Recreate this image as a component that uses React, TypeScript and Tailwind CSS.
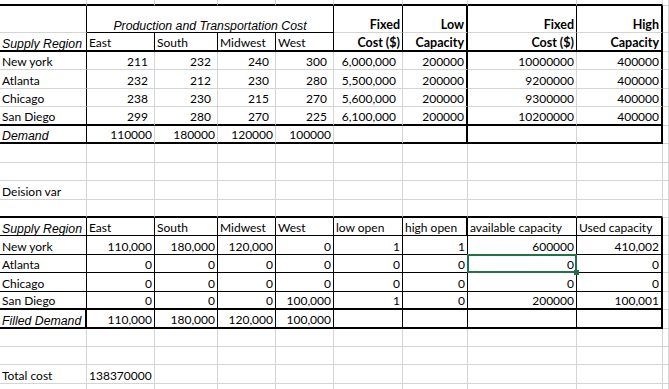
import clsx from "clsx";

type Bd = "g" | "b" | "B" | "n";
type Txt = [string, string] | null;

const RB: Record<Bd, string> = {
  g: "border-r border-r-[#d4d4d4]",
  b: "border-r border-r-black",
  B: "border-r-2 border-r-black",
  n: "",
};
const BB: Record<Bd, string> = {
  g: "border-b border-b-[#d4d4d4]",
  b: "border-b border-b-black",
  B: "border-b-2 border-b-black",
  n: "",
};

// text styles
const L = "justify-start pl-[2px]";
const R = "justify-end pr-[2px]";
const RC = "justify-end pr-[6px]";
const IT = "font-['Liberation_Sans',Arial,sans-serif] italic text-[12.3px] leading-[12px]";
const BO = "font-bold text-[12.5px]";

// border presets (A..I, J)
const G10: Bd[] = ["g", "g", "g", "g", "g", "g", "g", "g", "g", "g"];
const THICK: Bd[] = ["B", "B", "B", "B", "B", "B", "B", "B", "B", "g"];
const THIN: Bd[] = ["b", "b", "b", "b", "b", "b", "b", "b", "b", "g"];
const TOP_HEAD: Bd[] = ["b", "b", "b", "b", "b", "b", "B", "b", "B", "g"];
const TOP_DATA: Bd[] = ["b", "g", "g", "g", "g", "g", "B", "g", "B", "g"];
const BOT: Bd[] = ["b", "b", "b", "b", "b", "b", "b", "b", "B", "g"];
const BOT_HEAD: Bd[] = ["b", "b", "b", "b", "b", "b", "B", "b", "B", "g"];
const BOT_FILL: Bd[] = ["B", "b", "b", "b", "b", "b", "b", "b", "B", "g"];

interface CellProps {
  h: string;
  r: Bd;
  b: Bd;
  t?: Txt;
  span?: boolean;
  selected?: boolean;
}

function Cell({ h, r, b, t, span, selected }: CellProps) {
  return (
    <div
      className={clsx(
        "relative flex items-end whitespace-nowrap",
        h,
        RB[r],
        BB[b],
        span && "col-span-4",
        t ? t[1] : ""
      )}
    >
      {t && <span>{t[0]}</span>}
      {selected && (
        <div className="pointer-events-none absolute -left-px -top-px -right-px -bottom-px z-10 border-2 border-[#217346]">
          <div className="absolute -right-[4px] -bottom-[4px] h-[5px] w-[5px] bg-[#217346]" />
        </div>
      )}
    </div>
  );
}

function Row({
  h,
  rights,
  bottoms,
  texts = [],
  sel,
}: {
  h: string;
  rights: Bd[];
  bottoms: Bd[];
  texts?: Txt[];
  sel?: number;
}) {
  return (
    <>
      {rights.map((r, i) => (
        <Cell key={i} h={h} r={r} b={bottoms[i]} t={texts[i] ?? null} selected={sel === i} />
      ))}
    </>
  );
}

const n = (v: string): Txt => [v, R];
const c = (v: string): Txt => [v, RC];
const l = (v: string): Txt => [v, L];

export default function App() {
  return (
    <div className="h-[389px] w-[669px] overflow-hidden bg-white font-[Lato,sans-serif] text-[12px] leading-[14px] text-black">
      <div className="grid grid-cols-[87px_68px_63px_58px_58px_69px_65px_109px_86px_1fr]">
        {/* top strip */}
        <Row h="h-[6px]" rights={G10} bottoms={THICK} />

        {/* cost table header */}
        <Cell h="h-[27px]" r="b" b="g" />
        <Cell
          h="h-[27px]"
          r="b"
          b="b"
          span
          t={["Production and Transportation Cost", IT + " justify-center"]}
        />
        <Cell h="h-[27px]" r="b" b="g" t={["Fixed", BO + " " + R]} />
        <Cell h="h-[27px]" r="B" b="g" t={["Low", BO + " " + R]} />
        <Cell h="h-[27px]" r="b" b="g" t={["Fixed", BO + " " + R]} />
        <Cell h="h-[27px]" r="B" b="g" t={["High", BO + " " + R]} />
        <Cell h="h-[27px]" r="g" b="g" />

        <Row
          h="h-[19px]"
          rights={TOP_HEAD}
          bottoms={THICK}
          texts={[
            ["Supply Region", IT + " " + L],
            l("East"),
            l("South"),
            l("Midwest"),
            l("West"),
            ["Cost ($)", BO + " " + R],
            ["Capacity", BO + " " + R],
            ["Cost ($)", BO + " " + R],
            ["Capacity", BO + " " + R],
          ]}
        />
        <Row
          h="h-[18px]"
          rights={TOP_DATA}
          bottoms={G10}
          texts={[l("New york"), c("211"), c("232"), c("240"), c("300"), c("6,000,000"), n("200000"), n("10000000"), n("400000")]}
        />
        <Row
          h="h-[19px]"
          rights={TOP_DATA}
          bottoms={G10}
          texts={[l("Atlanta"), c("232"), c("212"), c("230"), c("280"), c("5,500,000"), n("200000"), n("9200000"), n("400000")]}
        />
        <Row
          h="h-[18px]"
          rights={TOP_DATA}
          bottoms={G10}
          texts={[l("Chicago"), c("238"), c("230"), c("215"), c("270"), c("5,600,000"), n("200000"), n("9300000"), n("400000")]}
        />
        <Row
          h="h-[19px]"
          rights={TOP_DATA}
          bottoms={THICK}
          texts={[l("San Diego"), c("299"), c("280"), c("270"), c("225"), c("6,100,000"), n("200000"), n("10200000"), n("400000")]}
        />
        <Row
          h="h-[18px]"
          rights={TOP_DATA}
          bottoms={THICK}
          texts={[["Demand", IT + " " + L], n("110000"), n("180000"), n("120000"), n("100000")]}
        />

        {/* gap rows */}
        <Row h="h-[19px]" rights={G10} bottoms={G10} />
        <Row h="h-[18px]" rights={G10} bottoms={G10} />
        <Row h="h-[19px]" rights={G10} bottoms={G10} texts={[l("Deision var")]} />
        <Row h="h-[18px]" rights={G10} bottoms={THICK} />

        {/* decision variables */}
        <Row
          h="h-[18px]"
          rights={BOT_HEAD}
          bottoms={THIN}
          texts={[
            ["Supply Region", IT + " " + L],
            l("East"),
            l("South"),
            l("Midwest"),
            l("West"),
            l("low open"),
            l("high open"),
            l("available capacity"),
            l("Used capacity"),
          ]}
        />
        <Row
          h="h-[19px]"
          rights={BOT}
          bottoms={THIN}
          texts={[l("New york"), n("110,000"), n("180,000"), n("120,000"), n("0"), n("1"), n("1"), n("600000"), n("410,002")]}
        />
        <Row
          h="h-[18px]"
          rights={BOT}
          bottoms={THIN}
          sel={7}
          texts={[l("Atlanta"), n("0"), n("0"), n("0"), n("0"), n("0"), n("0"), n("0"), n("0")]}
        />
        <Row
          h="h-[19px]"
          rights={BOT}
          bottoms={THIN}
          texts={[l("Chicago"), n("0"), n("0"), n("0"), n("0"), n("0"), n("0"), n("0"), n("0")]}
        />
        <Row
          h="h-[18px]"
          rights={BOT}
          bottoms={THICK}
          texts={[l("San Diego"), n("0"), n("0"), n("0"), n("100,000"), n("1"), n("0"), n("200000"), n("100,001")]}
        />
        <Row
          h="h-[19px]"
          rights={BOT_FILL}
          bottoms={THICK}
          texts={[["Filled Demand", IT + " " + L], n("110,000"), n("180,000"), n("120,000"), n("100,000")]}
        />

        <Row h="h-[18px]" rights={G10} bottoms={G10} />
        <Row h="h-[18px]" rights={G10} bottoms={G10} />
        <Row h="h-[19px]" rights={G10} bottoms={G10} texts={[l("Total cost"), l("138370000")]} />
        <Row h="h-[6px]" rights={G10} bottoms={G10} />
      </div>
    </div>
  );
}
